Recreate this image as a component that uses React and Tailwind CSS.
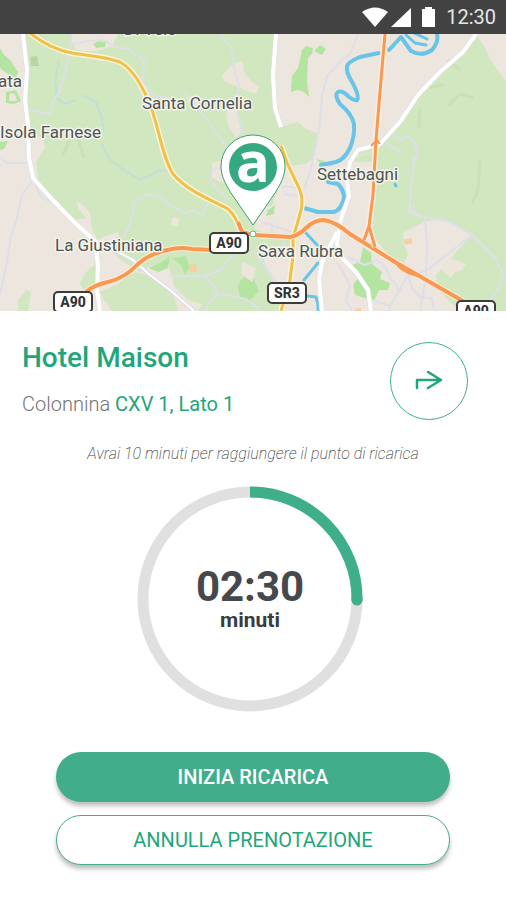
const woods = [
    'M25 30 L72 30 Q70 46 78 50 Q96 54 112 46 L118 34 H276 L273 75 L275 110 L281 127 L290 124 L298 122 L306 129 L318 134 L314 158 L305 164 L290 166 L284 172 L276 195 L272 206 L264 206 L254 228 L262 232 L294 234 L292 246 L272 246 L262 252 L266 268 L278 290 L283 311 H198 L174 286 L168 262 L150 266 L140 272 L118 258 L112 250 L120 240 L118 232 L106 236 L98 240 L92 230 L90 212 L77 201 L78 208 L86 218 L76 220 L62 208 L50 194 L38 180 L36 162 L45 148 L43 138 L30 133 L28 110 L27 70 Z',
    'M476 34 L485 48 L492 62 L500 74 L506 80 V311 L460 311 L448 300 L438 288 L436 275 L448 262 L470 236 L460 228 L448 221 L432 220 L424 222 L403 233 L404 245 L408 254 L404 264 L388 254 L376 240 L373 228 L376 150 L352 158 L362 150 L382 144 L400 122 L420 92 L442 72 L464 50 Z',
    'M100 292 L118 284 L134 272 L152 276 L172 290 L192 311 H112 L104 300 Z',
    'M80 284 L84 274 L95 264 V284 L84 290 Z',
    'M18 300 L26 290 L31 292 L28 311 H18 Z',
    'M354 158 L372 152 L373 162 L356 162 Z',
];

const parks = [
    'M0 48 L4 55 L10 60 L18 72 L15 82 L8 74 L0 68 Z',
    'M6 92 L16 90 L21 101 L14 104 L6 103 Z M10 93 L9 101 L17 101 L15 94 Z',
    'M93 44 L98 41 L106 42 L105 47 L96 48 Z',
    'M302 50 L306 46 L313 48 L312 54 L308 58 L307 80 L309 97 L304 92 L298 90 L291 92 L292 76 L298 68 Z',
    'M314 51 L320 45 L326 49 L322 55 Z',
    'M360 262 L363 247 L371 253 L372 264 L382 272 L380 279 L390 283 L388 290 L379 290 L374 301 L355 295 L353 285 L358 278 L352 265 Z',
    'M238 286 L241 280 L250 273 L254 280 L259 291 L250 300 L240 298 Z',
    'M148 268 L162 262 L170 256 L168 268 L158 272 Z',
    'M268 210 L275 205 L274 214 L266 216 Z',
    'M172 258 L186 256 L190 268 L184 274 L182 266 Z',
    'M0 142 L8 141 L4 149 L0 150 Z',
    'M316 159 L324 161 L334 166 L322 165 Z',
];

const clearings = [
    'M222 76 L230 66 L243 60 L244 72 L250 80 L259 87 L256 94 L238 87 L224 81 Z',
    'M226 110 L236 106 L243 130 L236 138 L228 126 Z',
    'M184 90 L188 96 L196 98 L202 112 L190 104 Z',
    'M242 262 L256 268 L252 282 L241 274 Z',
    'M172 290 L188 300 L202 304 L198 311 H178 Z',
    'M440 268 L449 258 L456 260 L466 264 L462 270 L455 272 L451 278 L444 272 Z',
    'M172 218 L179 217 L178 226 L171 226 Z',
    'M212 163 L222 160 L224 184 L212 178 Z',
];

const minorRoads = [
    'M72 30 L70 50 L66 68 L60 92 L55 98 L50 113 L45 114 L30 109',
    'M73 44 L88 41 L105 40 L112 46 L128 49 L144 60 L143 82 L155 96 L170 98',
    'M220 34 L231 48 L235 72 L239 86 L236 108 L243 136',
    'M186 93 L203 115 L226 146',
    'M358 34 L350 54 L340 62 L327 76 L322 96 L320 122 L316 145 L310 172 L302 196',
    'M0 157 L7 163 L28 163',
    'M33 180 L22 195 L16 222 L11 236 L7 262 L0 295',
    'M35 185 L42 198 L58 204',
    'M123 238 L130 225 L135 200 L141 199 L148 194 L160 197 L172 206 L184 213 L195 210 L202 215 L208 203',
    'M212 170 L210 180 L218 190 L228 200 M212 170 L222 168',
    'M170 276 L205 276 L220 270 L232 256 L233 246',
    'M205 276 L219 293 L246 299 L262 311 M219 293 L208 303 L206 311',
    'M253 250 L266 268 L276 282 M272 222 L272 234 M284 238 L285 254',
    'M282 186 L299 188 M284 194 L298 196 M262 222 L292 232',
    'M414 155 L411 190 L409 212 L426 218 L446 220 L472 235 L495 258 L503 273 L500 286 L491 300',
    'M414 205 L414 213 M425 218 L427 246 L426 276 L420 311',
    'M472 235 L450 252 L428 270 L408 275 L398 293 L390 306 L388 311',
    'M348 257 L365 265 L377 260 L386 268 L391 280 L396 284 L399 293',
    'M408 275 L412 288 L420 297 L432 298 L434 311',
    'M337 262 L350 285 L346 300 L352 311 M372 300 L390 306',
    'M386 143 L396 149 L400 151 M394 136 L402 140 L407 136 L415 142 L417 155 L414 166',
];

const whiteRoads = [
    'M23 34 L27 70 L25 100 L28 125 L29 158 L33 178 L50 197 L74 222 L96 242 L98 268 L97 290 L100 311',
    'M276 34 L273 75 L275 108 L281 127',
    'M476 34 L463 52 L440 72 L418 95 L400 122 L380 144 L358 150 L350 162 L347 180 L349 196 L340 222 L337 244 L342 258 L356 272 L368 290 L371 311',
    'M337 232 L322 262 L319 280 L322 311',
];

const labels = [
    { text: 'Di Veio', x: 124, y: 35 },
    { text: 'Santa Cornelia', x: 142, y: 109 },
    { text: 'Isola Farnese', x: 0, y: 138 },
    { text: 'ata', x: -2, y: 87 },
    { text: 'La Giustiniana', x: 55, y: 251 },
    { text: 'Settebagni', x: 317, y: 180 },
    { text: 'Saxa Rubra', x: 258, y: 257 },
];

const shields = [
    { text: 'A90', x: 209, y: 232 },
    { text: 'A90', x: 53, y: 291 },
    { text: 'SR3', x: 267, y: 282 },
    { text: 'A90', x: 456, y: 300 },
];

function StatusBar() {
    return (
        <header className="flex h-[34px] items-center justify-end bg-[#424242] pr-[10px]">
            <svg className="h-5 w-[76px]" viewBox="0 0 76 20" fill="#fff" aria-hidden="true">
                <path d="M0 5 Q13 -4 26 5 L13 20 Z" />
                <path d="M49 1 V20 H29 Z" />
                <path d="M60 2 H63 V0 H70 V2 H73 V20 H60 Z" />
            </svg>
            <span className="ml-2 text-xl leading-5 text-[#e6e6e6]">12:30</span>
        </header>
    );
}

function Map() {
    return (
        <svg className="block w-full" viewBox="0 34 506 277" role="img" aria-label="Mappa">
            <rect y="34" width="506" height="277" fill="#ede6df" />
            <g fill="#d1e7c0">
                {woods.map((d) => <path key={d} d={d} />)}
            </g>
            <g fill="#b4e5a0" fillRule="evenodd">
                {parks.map((d) => <path key={d} d={d} />)}
            </g>
            <g fill="#ebe5da">
                {clearings.map((d) => <path key={d} d={d} />)}
            </g>
            <path d="M30 57 L37 56 L39 66 L31 66 Z" fill="#b8d6a3" />
            <path d="M404 240 L411 238 L413 243 L405 245 Z M189 265 L196 264 L197 271 L190 272 Z M355 309 L361 308 V311 H355 Z" fill="#f6cfa3" />
            <path d="M430 88 L444 84 M420 108 L419 128 M448 106 L460 94 L474 98 M480 160 L478 190 L472 204 M448 60 L460 70 M70 140 L62 156 M78 138 L84 158" fill="none" stroke="#cae1b7" strokeWidth="3" />

            {/* Water */}
            <g fill="none" strokeLinejoin="round" strokeLinecap="round">
                <path d="M59 60 L55 82 L57 98 L65 104 L76 100 M82 95 L96 102 L101 116 L104 130 M102 145 L110 160 L124 170 L140 180 L150 176 L160 170 L170 172" stroke="#c3dfd6" strokeWidth="2" />
                <g stroke="#68c4e8" strokeWidth="4">
                    <path d="M437 34 Q439 42 432 50 Q422 57 411 51 L401 37 L389 50" />
                    <path d="M406 35 L415 43 L426 45 M414 33 L427 39" strokeWidth="3" />
                    <path d="M379 53 L360 57 Q348 62 347 66 Q346 72 351 80 Q360 96 357 100 Q354 101 348 96 Q342 90 338 92 Q334 95 340 104 Q352 114 354 124 Q355 136 350 148 Q344 160 336 162 L321 165" />
                    <path d="M328 182 L338 184 Q344 190 344 198 Q341 210 334 212 L318 212 L304 208" />
                    <path d="M305 232 L318 246 M318 263 L304 280 M308 296 L316 297 L318 304 V311" strokeWidth="3" />
                    <path d="M395 184 L396 186" strokeWidth="3" />
                </g>
            </g>

            {/* Roads */}
            <g fill="none" strokeLinejoin="round">
                <g stroke="#dedfe9" strokeWidth="2">
                    {minorRoads.map((d) => <path key={d} d={d} />)}
                </g>
                <path d="M96 242 L120 253 L133 260 L150 275 L170 290 L194 311" stroke="#dcdde8" strokeWidth="4" />
                <path d="M96 242 L120 253 L133 260 L150 275 L170 290 L194 311" stroke="#fff" strokeWidth="2" />
                <g stroke="#dfdfe8" strokeWidth="5">
                    {whiteRoads.map((d) => <path key={d} d={d} />)}
                </g>
                <g stroke="#fff" strokeWidth="4">
                    {whiteRoads.map((d) => <path key={d} d={d} />)}
                </g>
                {['#fdf3d6', '#f0c04d'].map((color, i) => (
                    <path
                        key={color}
                        stroke={color}
                        strokeWidth={i === 0 ? 6 : 3}
                        d="M30 33 Q50 49 72 53 C90 56 104 56 120 62 Q138 72 152 110 C160 134 163 158 173 174 C188 192 216 202 228 209 Q235 214 241 232 M281 146 L287 163 L300 190 Q304 202 300 214 L296 228 L293 238 L293 256 L290 280 L281 311"
                    />
                ))}
                {['#fdeedd', '#f99850'].map((color, i) => (
                    <path
                        key={color}
                        stroke={color}
                        strokeWidth={i === 0 ? 6 : 4}
                        d="M86 292 Q94 285 108 282 Q125 278 138 264 Q150 253 172 249 Q182 247 192 249 L212 250 M238 222 L242 232 L253 235 L290 237 Q298 236 306 228 Q314 220 324 220 Q336 222 350 234 L395 262 L475 308"
                    />
                ))}
                {['#fdeedd', '#f99850'].map((color, i) => (
                    <path
                        key={color}
                        stroke={color}
                        strokeWidth={i === 0 ? 6 : 3}
                        d="M385 34 L381 80 L376 140 L373 195 L369 226 L364 240 M369 226 L375 247"
                    />
                ))}
                <path d="M394 260 Q400 272 418 276 M371 146 L377 140 L380 144" stroke="#f99850" strokeWidth="2" />
            </g>

            <g fontFamily="Roboto, sans-serif" fontSize="17" fill="#505255" stroke="#f3f5ea" strokeWidth="3" strokeLinejoin="round" paintOrder="stroke">
                {labels.map((label) => (
                    <text key={label.text} x={label.x} y={label.y}>{label.text}</text>
                ))}
            </g>

            {shields.map((shield) => (
                <g key={`${shield.x}-${shield.y}`}>
                    <rect x={shield.x + 1} y={shield.y + 1} width="38" height="20" rx="4" fill="#fff" stroke="#3c3c3c" strokeWidth="2" />
                    <text x={shield.x + 20} y={shield.y + 16} textAnchor="middle" fontFamily="Roboto, sans-serif" fontWeight="800" fontSize="14" fill="#333">
                        {shield.text}
                    </text>
                </g>
            ))}

            {/* Station pin */}
            <circle cx="253" cy="234" r="3" fill="#fff" stroke="#66b394" />
            <path d="M253 225 L231 193 C225 183 221 176 221 166 A32 31 0 0 1 285 166 C285 176 281 183 275 193 Z" fill="#fff" stroke="#3d9f78" />
            <circle cx="253" cy="167" r="24" fill="#36a983" />
            <text x="253" y="182" textAnchor="middle" fontFamily="Open Sans, sans-serif" fontWeight="700" fontSize="56" fill="#fff">a</text>
        </svg>
    );
}

function Timer() {
    return (
        <div className="grid size-[226px] place-items-center" role="timer">
            <svg className="col-start-1 row-start-1 size-full" viewBox="0 0 226 226" fill="none" strokeWidth="11" aria-hidden="true">
                <circle cx="113" cy="113" r="107" stroke="#e0e0e0" />
                <path d="M113 6 A107 107 0 0 1 220 115" stroke="#3fae8a" />
                <path d="M220 113 V114" stroke="#3fae8a" strokeLinecap="round" />
            </svg>
            <p className="col-start-1 row-start-1 flex flex-col items-center">
                <span className="text-[42px] leading-[42px] font-bold text-[#46494c]">02:30</span>
                <span className="text-[21px] leading-6 font-bold text-[#3a3d40]">minuti</span>
            </p>
        </div>
    );
}

export default function App() {
    return (
        <div className="min-h-screen bg-white font-[Roboto,sans-serif]">
            <StatusBar />
            <Map />

            <main className="flex flex-col">
                <section className="flex items-start justify-between pt-[31px] pr-[38px] pl-[22px]">
                    <div>
                        <h1 className="text-[28px] leading-8 font-medium text-[#1fa67a]">Hotel Maison</h1>
                        <p className="mt-[18px] text-xl leading-6 font-light text-[#757575]">
                            Colonnina <span className="font-normal text-[#1fa67a]">CXV 1, Lato 1</span>
                        </p>
                    </div>
                    <button type="button" aria-label="Indicazioni" className="grid size-[78px] place-items-center rounded-full border border-[#3fae8a]">
                        <svg className="h-5 w-7" viewBox="0 0 28 20" fill="none" stroke="#1fa67a" strokeWidth="2.5" strokeLinecap="round" strokeLinejoin="round" aria-hidden="true">
                            <path d="M2 17 V9 H25 M13 1 L26 9 L13 17" />
                        </svg>
                    </button>
                </section>

                <p className="mt-6 text-center text-base leading-5 font-extralight text-[#444] italic">
                    Avrai 10 minuti per raggiungere il punto di ricarica
                </p>

                <div className="mt-[22px] flex justify-center pr-1.5">
                    <Timer />
                </div>

                <div className="mt-10 flex flex-col gap-[13px] px-14 pb-8">
                    <button type="button" className="h-[50px] rounded-full bg-[#42ad8b] text-xl font-medium text-white shadow-[0_4px_4px_rgba(0,0,0,0.25)]">
                        INIZIA RICARICA
                    </button>
                    <button type="button" className="h-[50px] rounded-full border border-[#42ad8b] bg-white text-xl text-[#1fa67a] shadow-[0_4px_4px_rgba(0,0,0,0.25)]">
                        ANNULLA PRENOTAZIONE
                    </button>
                </div>
            </main>
        </div>
    );
}
